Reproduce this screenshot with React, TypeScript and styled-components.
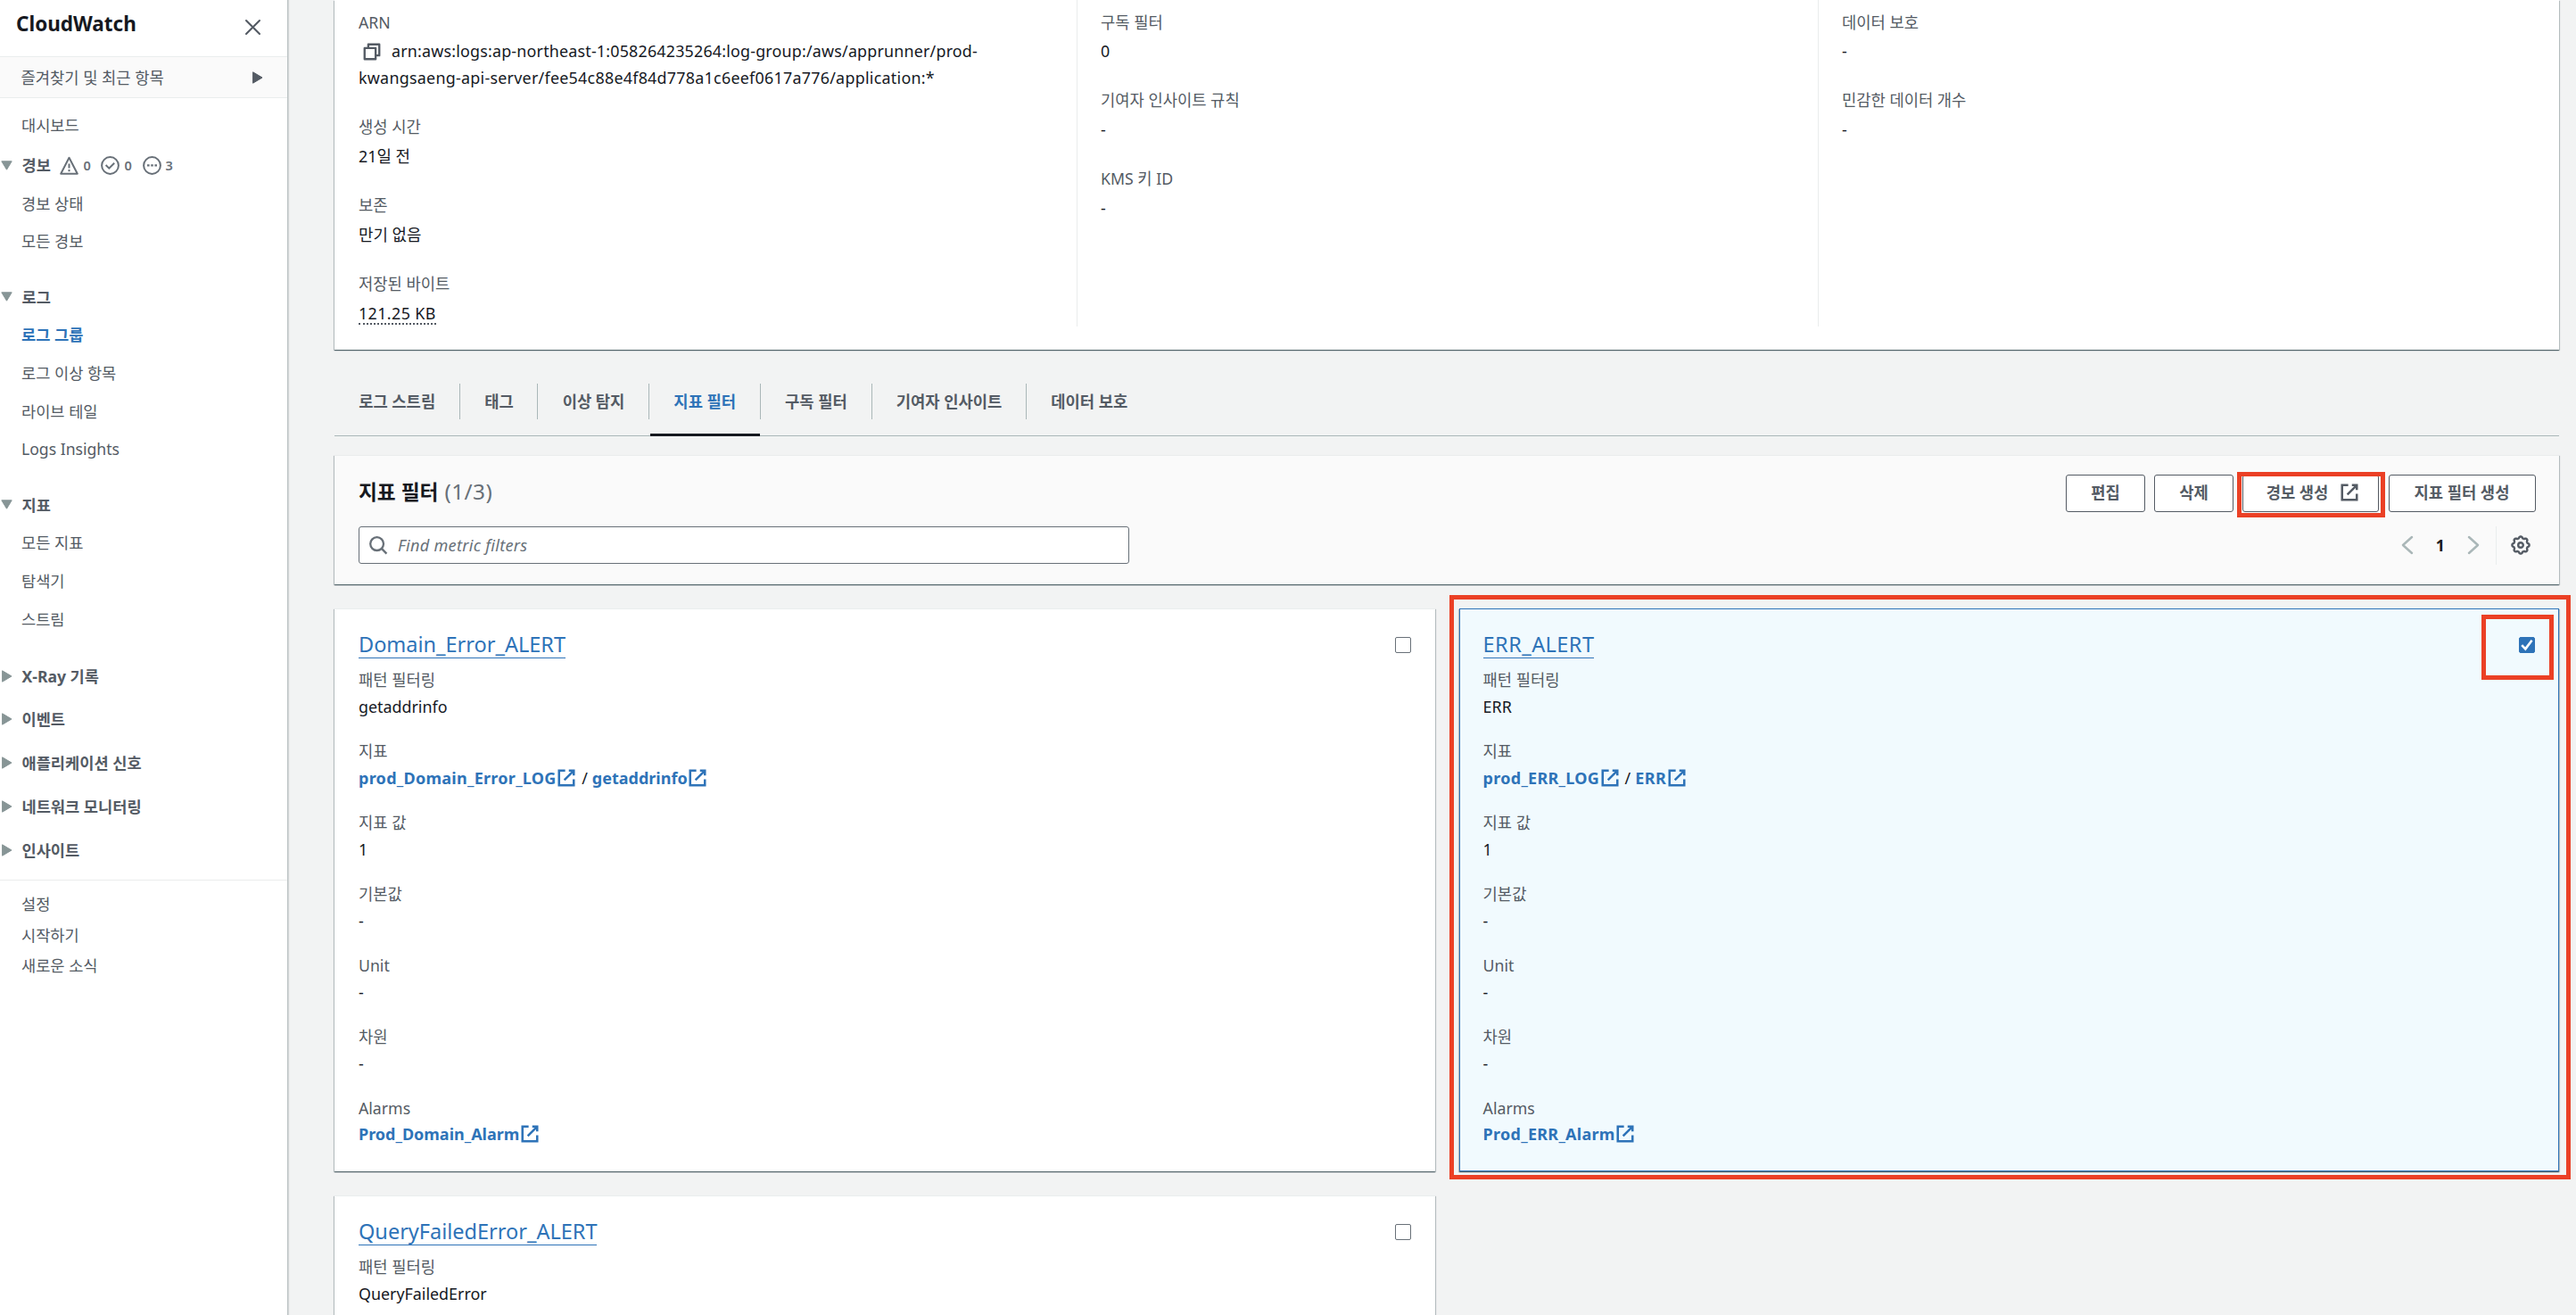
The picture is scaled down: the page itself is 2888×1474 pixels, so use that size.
import React from 'react';
import styled, { createGlobalStyle, css } from 'styled-components';

const color = {
  text: '#16191f',
  muted: '#545b64',
  soft: '#687078',
  link: '#2e73b8',
  line: '#aab7b8',
  hair: '#eaeded',
  page: '#f2f3f3',
  head: '#fafafa',
  mark: '#eb4025',
  arrow: '#879596',
};

const Global = createGlobalStyle`
  * { box-sizing: border-box; }
  html, body { margin: 0; padding: 0; }
  body {
    background: ${color.page};
    color: ${color.text};
    font-family: "Noto Sans", "Noto Sans CJK KR", sans-serif;
    font-size: 17.7px;
    line-height: 30px;
    overflow: hidden;
  }
  svg { display: block; flex: none; }
`;

const Shell = styled.div`
  display: flex;
  width: 2888px;
  height: 1474px;
  overflow: hidden;
`;

/* ---------- sidebar ---------- */

const Side = styled.nav`
  flex: none;
  width: 323px;
  height: 1474px;
  background: #fff;
  border-right: 1px solid #bcc3c4;
  box-shadow: 1px 0 1px rgba(0, 28, 36, 0.12);
  color: ${color.muted};
  z-index: 1;
`;

const SideHead = styled.header`
  display: flex;
  justify-content: space-between;
  height: 64px;
  padding: 12px 29px 0 18px;
  border-bottom: 1px solid ${color.hair};
`;

const Brand = styled.h2`
  margin: 0;
  font-size: 22.5px;
  font-weight: 700;
  line-height: 30px;
  color: ${color.text};
`;

const CloseButton = styled.span`
  padding-top: 9px;
`;

const Favorites = styled.div`
  display: flex;
  align-items: center;
  justify-content: space-between;
  height: 46px;
  padding: 0 27px 0 23.5px;
  background: ${color.head};
  border-bottom: 1px solid ${color.hair};
`;

const SideItem = styled.a<{ $active?: boolean; $h?: number }>`
  display: flex;
  align-items: center;
  height: ${(p) => p.$h ?? 42.7}px;
  padding-left: 24px;
  white-space: nowrap;
  font-size: 17.6px;
  ${(p) =>
    p.$active &&
    css`
      color: ${color.link};
      font-weight: 700;
    `}
`;

const Groups = styled.div`
  padding-top: 6.5px;
  height: 877px;
  border-bottom: 1px solid ${color.hair};
`;

const Group = styled.section`
  padding-bottom: 20px;
`;

const GroupHead = styled.div<{ $h?: number }>`
  display: flex;
  align-items: center;
  height: ${(p) => p.$h ?? 42.3}px;
  font-weight: 700;
  font-size: 17.6px;
  white-space: nowrap;
`;

const Caret = styled.span`
  width: 24.5px;
  padding-left: 1px;
`;

const Counters = styled.span`
  display: flex;
  align-items: center;
  gap: 11.8px;
  margin-left: 10.5px;
  color: ${color.soft};
`;

const Counter = styled.span`
  display: flex;
  align-items: center;
  gap: 5px;
  font-size: 14.5px;
  font-weight: 600;
`;

const SideFoot = styled.div`
  padding-top: 9px;
`;

/* ---------- main ---------- */

const Main = styled.main`
  flex: 1;
  display: flex;
  flex-direction: column;
  padding: 0 19px 0 52px;
`;

const surface = css`
  background: #fff;
  box-shadow: 0 1px 1px 0 rgba(0, 28, 36, 0.5), 1px 1px 1px 0 rgba(0, 28, 36, 0.18),
    -1px 1px 1px 0 rgba(0, 28, 36, 0.18);
`;

const Details = styled.section`
  ${surface}
  flex: none;
  display: flex;
  height: 392px;
  padding: 0 0 26px 27px;
`;

const DetailColumn = styled.div<{ $w: number }>`
  display: flex;
  flex-direction: column;
  gap: 25.3px;
  width: ${(p) => p.$w}px;
  padding-top: 10.5px;
  & + & {
    border-left: 1px solid ${color.hair};
    padding-left: 26px;
  }
`;

const Detail = styled.div`
  display: flex;
  flex-direction: column;
  gap: 3px;
`;

const Label = styled.div`
  color: ${color.muted};
  line-height: 29.8px;
`;

const Value = styled.div`
  line-height: 29.8px;
  white-space: nowrap;
  font-size: 17.87px;
`;

const ArnLine = styled.span<{ $track: number }>`
  display: flex;
  align-items: center;
  gap: 11px;
  letter-spacing: ${(p) => p.$track}px;
  svg {
    margin-left: 4px;
  }
`;

const Bytes = styled.span`
  display: inline-block;
  line-height: 22px;
  letter-spacing: 0.4px;
  border-bottom: 2px dotted ${color.muted};
`;

const Tabs = styled.div`
  flex: none;
  display: flex;
  height: 77px;
  margin-top: 19.5px;
  border-bottom: 1.4px solid ${color.line};
`;

const Tab = styled.a<{ $active?: boolean }>`
  position: relative;
  display: flex;
  align-items: center;
  padding: 0 26.8px 0 27.2px;
  font-weight: 700;
  color: ${(p) => (p.$active ? color.link : color.muted)};
  white-space: nowrap;
  ${(p) =>
    p.$active &&
    css`
      &::after {
        content: '';
        position: absolute;
        left: 1px;
        right: 0;
        bottom: -1px;
        height: 3px;
        background: ${color.text};
      }
    `}
`;

const TabRule = styled.i`
  align-self: center;
  width: 1px;
  height: 40px;
  background: ${color.line};
`;

const Toolbar = styled.section`
  ${surface}
  flex: none;
  display: flex;
  flex-direction: column;
  gap: 16.5px;
  height: 144.5px;
  margin-top: 21.5px;
  padding: 20.5px 26.5px 0 27px;
  border-top: 1px solid ${color.hair};
  background: ${color.head};
`;

const ToolRow = styled.div`
  display: flex;
  align-items: center;
  justify-content: space-between;
  height: 42px;
`;

const Heading = styled.h1`
  display: flex;
  align-items: baseline;
  gap: 7px;
  margin: 0;
  padding-bottom: 2px;
  font-size: 22.7px;
  font-weight: 700;
  line-height: 32px;
`;

const Count = styled.span`
  font-size: 24.3px;
  font-weight: 400;
  letter-spacing: 0.5px;
  color: ${color.soft};
`;

const Actions = styled.div`
  display: flex;
  gap: 10.2px;
`;

const Button = styled.button<{ $w: number; $icon?: boolean }>`
  position: relative;
  display: flex;
  align-items: center;
  justify-content: center;
  gap: 12.5px;
  width: ${(p) => p.$w}px;
  height: 42px;
  padding: 0 0 2px ${(p) => (p.$icon ? 4 : 0)}px;
  border: 1.3px solid ${color.muted};
  border-radius: 3px;
  background: #fff;
  color: ${color.muted};
  font: inherit;
  font-weight: 700;
  white-space: nowrap;
`;

const Mark = styled.span<{ $inset: string }>`
  position: absolute;
  inset: ${(p) => p.$inset};
  border: 5px solid ${color.mark};
  pointer-events: none;
  z-index: 2;
`;

const Search = styled.div`
  display: flex;
  align-items: center;
  gap: 11px;
  width: 864px;
  height: 42.5px;
  padding-left: 10px;
  border: 1.3px solid ${color.soft};
  border-radius: 3px;
  background: #fff;
  color: ${color.soft};
  font-style: italic;
  font-size: 18.1px;
  letter-spacing: 0.3px;
`;

const Pager = styled.div`
  display: flex;
  align-items: center;
  height: 43px;
  color: ${color.line};
`;

const PageNumber = styled.b`
  width: 59.5px;
  text-align: center;
  color: ${color.text};
`;

const Preferences = styled.span`
  display: flex;
  align-items: center;
  align-self: stretch;
  margin-left: 18px;
  padding: 0 6px 0 16px;
  border-left: 1px solid ${color.hair};
  color: ${color.muted};
`;

const Grid = styled.div`
  display: grid;
  grid-template-columns: 1234px 1233px;
  grid-auto-rows: 631px;
  gap: 27px;
  margin-top: 27px;
`;

const CardBox = styled.article<{ $selected?: boolean }>`
  ${surface}
  position: relative;
  padding: 25px 27px 0 27px;
  border-top: 1px solid ${color.hair};
  ${(p) =>
    p.$selected &&
    css`
      padding: 25px 26px 0 25.6px;
      border: 1.4px solid ${color.link};
      background: #f1fafe;
    `}
`;

const CardHead = styled.div`
  display: flex;
  justify-content: space-between;
  align-items: flex-start;
  height: 39px;
`;

const CardTitle = styled.a<{ $track?: number }>`
  border-bottom: 1.4px solid ${color.link};
  color: ${color.link};
  font-size: 23.5px;
  line-height: 29px;
  letter-spacing: ${(p) => p.$track ?? 0}px;
`;

const CheckWrap = styled.span`
  position: relative;
  margin-top: 6px;
`;

const Check = styled.span<{ $on?: boolean }>`
  display: flex;
  align-items: center;
  justify-content: center;
  width: 18.5px;
  height: 18.5px;
  border: 1.4px solid ${(p) => (p.$on ? color.link : color.soft)};
  border-radius: 2px;
  background: ${(p) => (p.$on ? color.link : '#fff')};
`;

const Field = styled.div`
  height: 80px;
`;

const FieldLabel = styled.div`
  line-height: 30px;
  color: ${color.muted};
`;

const FieldValue = styled.div<{ $tight?: boolean }>`
  display: flex;
  align-items: center;
  margin-top: ${(p) => (p.$tight ? -1 : 0.5)}px;
  line-height: 30px;
  font-size: 17.87px;
`;

const Out = styled.a<{ $track?: number }>`
  display: flex;
  align-items: center;
  gap: 0.5px;
  color: ${color.link};
  font-weight: 700;
  font-size: 18px;
  letter-spacing: ${(p) => p.$track ?? 0}px;
`;

const Slash = styled.span`
  margin: 0 5px 0 6px;
`;

/* ---------- icons ---------- */

const line = (w: number) => ({
  fill: 'none',
  stroke: 'currentColor',
  strokeWidth: w,
});

const External = ({ size = 22 }: { size?: number }) => (
  <svg width={size} height={size} viewBox="0 0 16 16" {...line(1.85)}>
    <path d="M10 2h4v4M6.3 9.7 13.8 2.2M14 9v5H2V2h5" />
  </svg>
);

const CopyIcon = () => (
  <svg width="22" height="22" viewBox="0 0 16 16" {...line(1.7)} color={color.muted} strokeLinejoin="round">
    <path d="M2 5h9v9H2zM5 5V2h9v9h-3" />
  </svg>
);

const Down = () => (
  <svg width="13" height="11" viewBox="0 0 13 11" fill={color.arrow} stroke={color.arrow} strokeLinejoin="round">
    <path d="M.8.8h11.4L6.5 10.2z" />
  </svg>
);

const Right = ({ fill = color.arrow }: { fill?: string }) => (
  <svg width="13" height="14" viewBox="0 0 13 14" fill={fill} stroke={fill} strokeLinejoin="round">
    <path d="M1.6.8 12 7 1.6 13.2z" />
  </svg>
);

const CloseIcon = () => (
  <svg width="19" height="19" viewBox="0 0 19 19" {...line(2.1)} color={color.muted} strokeLinecap="round">
    <path d="m2 2 15 15M17 2 2 17" />
  </svg>
);

const WarnIcon = () => (
  <svg width="21" height="21" viewBox="0 0 21 21" {...line(2)} strokeLinejoin="round">
    <path d="M10.5 1.8 19.8 19.7H1.2zM10.5 8.4v5.2M10.5 15v2.3" />
  </svg>
);

const OkIcon = () => (
  <svg width="21" height="21" viewBox="0 0 21 21" {...line(2)}>
    <circle cx="10.5" cy="10.5" r="9.4" />
    <path d="m5.6 10 3.7 3.6 5.9-5.9" />
  </svg>
);

const PendingIcon = () => (
  <svg width="21" height="21" viewBox="0 0 21 21" {...line(2)}>
    <circle cx="10.5" cy="10.5" r="9.4" />
    <path d="M5 10.4h2.6M9.2 10.4h2.6M13.4 10.4H16" strokeWidth="2.3" />
  </svg>
);

const SearchIcon = () => (
  <svg width="22" height="22" viewBox="0 0 22 22" {...line(2.3)}>
    <circle cx="9.6" cy="9.6" r="7.4" />
    <path d="m14.6 14.6 5.8 6" />
  </svg>
);

const Chevron = ({ flip }: { flip?: boolean }) => (
  <svg width="14" height="22" viewBox="0 0 14 22" {...line(2.5)} strokeLinecap="round" strokeLinejoin="round">
    <path d={flip ? 'm2 2 10 9-10 9' : 'M12 2 2 11l10 9'} />
  </svg>
);

const gearPath =
  Array.from({ length: 96 }, (_, i) => {
    const a = (i / 96) * Math.PI * 2;
    const r = 8.7 + 0.95 * Math.tanh(1.6 * Math.cos(8 * a));
    return `${i ? 'L' : 'M'}${(11 + r * Math.cos(a)).toFixed(2)} ${(11 + r * Math.sin(a)).toFixed(2)}`;
  }).join('') + 'Z';

const GearIcon = () => (
  <svg width="22" height="22" viewBox="0 0 22 22" {...line(2.4)} strokeLinejoin="round">
    <path d={gearPath} />
    <circle cx="11" cy="11" r="2.8" />
  </svg>
);

const Tick = () => (
  <svg width="14" height="14" viewBox="0 0 14 14" fill="none" stroke="#fff" strokeWidth="2.6">
    <path d="M1.2 7.2 5.3 11.4 12.6 1.8" />
  </svg>
);

/* ---------- content ---------- */

type Metric = {
  name: string;
  pattern: string;
  metric: [string, string];
  alarm: string;
  selected?: boolean;
};

const filters: Metric[] = [
  {
    name: 'Domain_Error_ALERT',
    pattern: 'getaddrinfo',
    metric: ['prod_Domain_Error_LOG', 'getaddrinfo'],
    alarm: 'Prod_Domain_Alarm',
  },
  {
    name: 'ERR_ALERT',
    pattern: 'ERR',
    metric: ['prod_ERR_LOG', 'ERR'],
    alarm: 'Prod_ERR_Alarm',
    selected: true,
  },
];

const tabs = ['로그 스트림', '태그', '이상 탐지', '지표 필터', '구독 필터', '기여자 인사이트', '데이터 보호'];

const capsTracking = (s: string) => {
  if (/^ERR/.test(s)) return 0.45;
  return /LOG|ERR/.test(s) ? 0.28 : 0;
};

const OutLink = ({ children }: { children: string }) => (
  <Out $track={capsTracking(children)}>
    {children}
    <External />
  </Out>
);

const Entry = ({ label, children, tight }: { label: string; children: React.ReactNode; tight?: boolean }) => (
  <Field>
    <FieldLabel>{label}</FieldLabel>
    <FieldValue $tight={tight}>{children}</FieldValue>
  </Field>
);

const Card = ({ item }: { item: Metric }) => (
  <CardBox $selected={item.selected}>
    <CardHead>
      <CardTitle $track={capsTracking(item.name)}>{item.name}</CardTitle>
      <CheckWrap>
        <Check $on={item.selected}>{item.selected && <Tick />}</Check>
        {item.selected && <Mark $inset="-25px -21px -30px -42px" />}
      </CheckWrap>
    </CardHead>
    <Entry label="패턴 필터링">{item.pattern}</Entry>
    <Entry label="지표">
      <OutLink>{item.metric[0]}</OutLink>
      <Slash>/</Slash>
      <OutLink>{item.metric[1]}</OutLink>
    </Entry>
    <Entry label="지표 값">1</Entry>
    <Entry label="기본값">-</Entry>
    <Entry label="Unit">-</Entry>
    <Entry label="차원">-</Entry>
    <Entry label="Alarms" tight>
      <OutLink>{item.alarm}</OutLink>
    </Entry>
    {item.selected && <Mark $inset="-16px -14px -10px -12px" />}
  </CardBox>
);

const Info = ({ label, children }: { label: string; children: React.ReactNode }) => (
  <Detail>
    <Label>{label}</Label>
    <Value>{children}</Value>
  </Detail>
);

const OpenGroup = ({
  title,
  items,
  active,
  children,
}: {
  title: string;
  items: string[];
  active?: string;
  children?: React.ReactNode;
}) => (
  <Group>
    <GroupHead>
      <Caret>
        <Down />
      </Caret>
      {title}
      {children}
    </GroupHead>
    {items.map((t) => (
      <SideItem key={t} $active={t === active}>
        {t}
      </SideItem>
    ))}
  </Group>
);

export default function App() {
  return (
    <>
      <Global />
      <Shell>
        <Side>
          <SideHead>
            <Brand>CloudWatch</Brand>
            <CloseButton>
              <CloseIcon />
            </CloseButton>
          </SideHead>
          <Favorites>
            즐겨찾기 및 최근 항목
            <Right fill={color.muted} />
          </Favorites>
          <Groups>
            <SideItem $h={47.5}>대시보드</SideItem>
            <OpenGroup title="경보" items={['경보 상태', '모든 경보']}>
              <Counters>
                <Counter>
                  <WarnIcon />0
                </Counter>
                <Counter>
                  <OkIcon />0
                </Counter>
                <Counter>
                  <PendingIcon />3
                </Counter>
              </Counters>
            </OpenGroup>
            <OpenGroup
              title="로그"
              items={['로그 그룹', '로그 이상 항목', '라이브 테일', 'Logs Insights']}
              active="로그 그룹"
            />
            <OpenGroup title="지표" items={['모든 지표', '탐색기', '스트림']} />
            {['X-Ray 기록', '이벤트', '애플리케이션 신호', '네트워크 모니터링', '인사이트'].map((t, i) => (
              <GroupHead key={t} $h={i ? 49.2 : 46}>
                <Caret>
                  <Right />
                </Caret>
                {t}
              </GroupHead>
            ))}
          </Groups>
          <SideFoot>
            {['설정', '시작하기', '새로운 소식'].map((t) => (
              <SideItem key={t} $h={34.6}>
                {t}
              </SideItem>
            ))}
          </SideFoot>
        </Side>
        <Main>
          <Details>
            <DetailColumn $w={805}>
              <Info label="ARN">
                <ArnLine $track={0.2}>
                  <CopyIcon />
                  arn:aws:logs:ap-northeast-1:058264235264:log-group:/aws/apprunner/prod-
                </ArnLine>
                <ArnLine $track={0.27}>
                  kwangsaeng-api-server/fee54c88e4f84d778a1c6eef0617a776/application:*
                </ArnLine>
              </Info>
              <Info label="생성 시간">21일 전</Info>
              <Info label="보존">만기 없음</Info>
              <Info label="저장된 바이트">
                <Bytes>121.25 KB</Bytes>
              </Info>
            </DetailColumn>
            <DetailColumn $w={831}>
              <Info label="구독 필터">0</Info>
              <Info label="기여자 인사이트 규칙">-</Info>
              <Info label="KMS 키 ID">-</Info>
            </DetailColumn>
            <DetailColumn $w={831}>
              <Info label="데이터 보호">-</Info>
              <Info label="민감한 데이터 개수">-</Info>
            </DetailColumn>
          </Details>
          <Tabs>
            {tabs.map((t, i) => (
              <React.Fragment key={t}>
                {i > 0 && <TabRule />}
                <Tab $active={t === '지표 필터'}>{t}</Tab>
              </React.Fragment>
            ))}
          </Tabs>
          <Toolbar>
            <ToolRow>
              <Heading>
                지표 필터 <Count>(1/3)</Count>
              </Heading>
              <Actions>
                <Button $w={89}>편집</Button>
                <Button $w={89}>삭제</Button>
                <Button $w={153} $icon>
                  경보 생성
                  <External />
                  <Mark $inset="-4px -8px -7px -7px" />
                </Button>
                <Button $w={165}>지표 필터 생성</Button>
              </Actions>
            </ToolRow>
            <ToolRow>
              <Search>
                <SearchIcon />
                Find metric filters
              </Search>
              <Pager>
                <Chevron />
                <PageNumber>1</PageNumber>
                <Chevron flip />
                <Preferences>
                  <GearIcon />
                </Preferences>
              </Pager>
            </ToolRow>
          </Toolbar>
          <Grid>
            {filters.map((f) => (
              <Card key={f.name} item={f} />
            ))}
            <CardBox>
              <CardHead>
                <CardTitle>QueryFailedError_ALERT</CardTitle>
                <CheckWrap>
                  <Check />
                </CheckWrap>
              </CardHead>
              <Entry label="패턴 필터링">QueryFailedError</Entry>
            </CardBox>
          </Grid>
        </Main>
      </Shell>
    </>
  );
}
